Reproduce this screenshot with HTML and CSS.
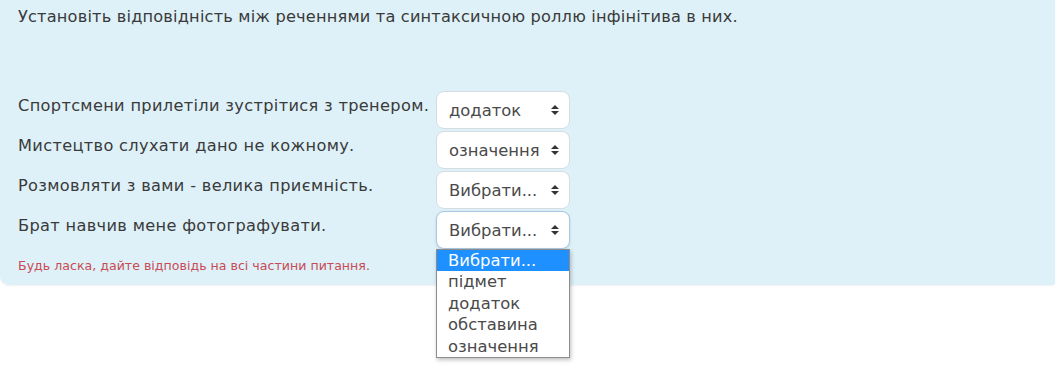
FILE: index.html
```html
<!DOCTYPE html>
<html lang="uk">
<head>
    <meta charset="UTF-8">
    <title>Відповідність</title>
    <link rel="stylesheet" href="styles.css">
</head>
<body>
    <div class="formulation">
        <div class="qtext">Установіть відповідність між реченнями та синтаксичною роллю інфінітива в них.</div>

        <div class="answers">
            <div class="row">
                <div class="label">Спортсмени прилетіли зустрітися з тренером.</div>
                <div class="select-wrap">
                    <div class="select"><span>додаток</span><svg class="arrow" width="8" height="10" viewBox="0 0 8 10"><path d="M4 0 L8 4 H0 Z M0 6 H8 L4 10 Z" fill="#333"/></svg></div>
                </div>
            </div>
            <div class="row">
                <div class="label">Мистецтво слухати дано не кожному.</div>
                <div class="select-wrap">
                    <div class="select"><span>означення</span><svg class="arrow" width="8" height="10" viewBox="0 0 8 10"><path d="M4 0 L8 4 H0 Z M0 6 H8 L4 10 Z" fill="#333"/></svg></div>
                </div>
            </div>
            <div class="row">
                <div class="label">Розмовляти з вами - велика приємність.</div>
                <div class="select-wrap">
                    <div class="select"><span>Вибрати...</span><svg class="arrow" width="8" height="10" viewBox="0 0 8 10"><path d="M4 0 L8 4 H0 Z M0 6 H8 L4 10 Z" fill="#333"/></svg></div>
                </div>
            </div>
            <div class="row">
                <div class="label">Брат навчив мене фотографувати.</div>
                <div class="select-wrap">
                    <div class="select focused"><span>Вибрати...</span><svg class="arrow" width="8" height="10" viewBox="0 0 8 10"><path d="M4 0 L8 4 H0 Z M0 6 H8 L4 10 Z" fill="#333"/></svg></div>
                    <!-- open dropdown list -->
                    <ul class="options">
                        <li class="active">Вибрати...</li>
                        <li>підмет</li>
                        <li>додаток</li>
                        <li>обставина</li>
                        <li>означення</li>
                    </ul>
                </div>
            </div>
        </div>

        <div class="error">Будь ласка, дайте відповідь на всі частини питання.</div>
    </div>
</body>
</html>
```

FILE: styles.css
```css
html {
    height: 100%;
}

body {
    margin: 0;
    min-height: 368px;
    font-family: "DejaVu Sans", sans-serif;
    color: #3a3a3a;
    background: #ffffff;
}

/* Question panel */
.formulation {
    position: relative;
    background-color: #def1f8;
    padding: 7px 18px 0 18px;
    height: 278px;
    margin-right: 3px;
    border-bottom-left-radius: 9px;
    border-bottom-right-radius: 3px;
    box-shadow: 0 1px 2px rgba(0, 0, 0, 0.06);
}

.qtext {
    font-size: 16.2px;
    line-height: 20px;
    letter-spacing: 0.18px;
}

.answers {
    margin-top: 64px;
}

.row {
    display: flex;
    align-items: flex-start;
    height: 40px;
}

.label {
    width: 418px;
    font-size: 16.2px;
    line-height: 20px;
    letter-spacing: 0.33px;
    padding-top: 5px;
}

/* Fake select boxes */
.select-wrap {
    position: relative;
}

.select {
    box-sizing: border-box;
    width: 134px;
    height: 38px;
    display: flex;
    align-items: center;
    justify-content: space-between;
    padding: 0 10px 0 12px;
    background: #ffffff;
    border: 1px solid #d6dde2;
    border-radius: 8px;
    font-size: 16.4px;
    color: #4a4a4a;
}

.select.focused {
    border-color: #a9c9e4;
    box-shadow: 0 1px 3px rgba(0, 0, 0, 0.12);
}

.arrow {
    flex: none;
}

/* Open dropdown list */
.options {
    position: absolute;
    top: 38px;
    left: 0;
    width: 134px;
    box-sizing: border-box;
    margin: 0;
    padding: 0;
    list-style: none;
    background: #ffffff;
    border: 1px solid #8c8c8c;
    box-shadow: 1px 2px 4px rgba(0, 0, 0, 0.25);
    font-size: 16.4px;
    line-height: 21.4px;
    color: #4a4a4a;
    z-index: 5;
}

.options li {
    padding-left: 11px;
}

.options li.active {
    background: #1e90ff;
    color: #ffffff;
}

/* Validation message */
.error {
    margin-top: 7px;
    font-size: 12.6px;
    color: #c94b55;
}
```
